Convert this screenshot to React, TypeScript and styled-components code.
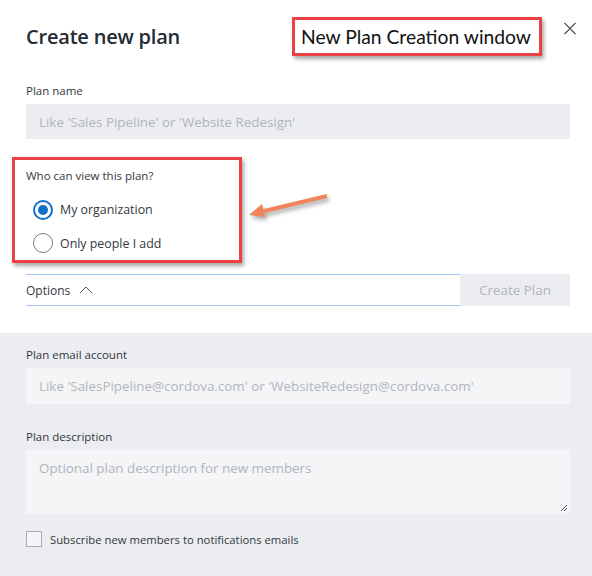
import React from "react";
import styled, { createGlobalStyle } from "styled-components";

const Global = createGlobalStyle`
  html, body { margin: 0; padding: 0; background: #fff; }
  body { width: 592px; height: 576px; overflow: hidden; font-family: "Segoe UI", "Open Sans", sans-serif; }
  * { box-sizing: border-box; }
`;

const Page = styled.div`
  position: relative;
  width: 592px;
  height: 576px;
  display: flex;
  flex-direction: column;
  background: #fff;
`;

const Top = styled.div`
  padding: 0 16px 0 26px;
  display: flex;
  flex-direction: column;
`;

const Header = styled.div`
  height: 72px;
  display: flex;
  align-items: center;
`;

const Title = styled.h1`
  margin: 0;
  font-family: "Open Sans", sans-serif;
  font-size: 20px;
  font-weight: 600;
  color: #262a33;
  letter-spacing: -0.2px;
  white-space: nowrap;
`;

const Callout = styled.div`
  margin-left: auto;
  flex-shrink: 0;
  width: 250px;
  height: 39px;
  border: 3px solid #ea4242;
  background: #fff;
  box-shadow: 2px 3px 4px rgba(0, 0, 0, 0.35);
  display: flex;
  align-items: center;
  padding-left: 6px;
  font-family: "Lato", sans-serif;
  font-size: 19.3px;
  color: #111;
  white-space: nowrap;
`;

const Close = styled.button`
  margin-left: 22px;
  flex-shrink: 0;
  align-self: flex-start;
  margin-top: 22px;
  width: 12px;
  height: 12px;
  padding: 0;
  border: 0;
  background: none;
  display: flex;
  align-items: center;
  justify-content: center;
`;

const Label = styled.div`
  font-family: "Open Sans", sans-serif;
  font-size: 11.5px;
  color: #333741;
  line-height: 16px;
`;

const TextInput = styled.div<{ $tone: "dark" | "light"; $h: number }>`
  width: 544px;
  height: ${(p) => p.$h}px;
  background: ${(p) => (p.$tone === "dark" ? "#ebedf0" : "#f4f5f7")};
  padding: 9px 13px;
  font-family: "Open Sans", sans-serif;
  font-size: 13.4px;
  color: #b2b6bc;
  line-height: 18px;
  position: relative;
`;

const Field = styled.div<{ $top: number }>`
  margin-top: ${(p) => p.$top}px;
  display: flex;
  flex-direction: column;
  gap: 5px;
`;

const AccessBox = styled.div`
  margin-top: 18px;
  margin-left: -14px;
  width: 230px;
  height: 106px;
  border: 3px solid #ea4242;
  box-shadow: 2px 3px 4px rgba(0, 0, 0, 0.35);
  padding: 8px 0 0 11px;
  display: flex;
  flex-direction: column;
`;

const RadioRow = styled.label`
  display: flex;
  align-items: center;
  gap: 7px;
  height: 34px;
  margin-left: 7px;
  font-family: "Open Sans", sans-serif;
  font-size: 12.4px;
  color: #333741;
`;

const RadioCircle = styled.span<{ $on?: boolean }>`
  width: 20px;
  height: 20px;
  border-radius: 50%;
  border: ${(p) => (p.$on ? "2px solid #0f6fc6" : "1px solid #7a7a7a")};
  display: flex;
  align-items: center;
  justify-content: center;
  &::after {
    content: "";
    display: ${(p) => (p.$on ? "block" : "none")};
    width: 10px;
    height: 10px;
    border-radius: 50%;
    background: #0f6fc6;
  }
`;

const OptionsBar = styled.div`
  margin-top: 11px;
  display: flex;
  width: 544px;
  height: 32px;
`;

const OptionsToggle = styled.div`
  flex: 1;
  border-top: 1px solid #9fc6ee;
  border-bottom: 1px solid #9fc6ee;
  display: flex;
  align-items: center;
  gap: 9px;
  font-family: "Open Sans", sans-serif;
  font-size: 12px;
  color: #333741;
`;

const CreateButton = styled.button`
  width: 110px;
  border: 0;
  background: #ebedf0;
  font-family: "Open Sans", sans-serif;
  font-size: 13.4px;
  color: #b2b6bc;
  padding: 0;
`;

const Gray = styled.div`
  margin-top: 27px;
  flex: 1;
  background: #ecedf0;
  padding: 14px 22px 0 26px;
  display: flex;
  flex-direction: column;
`;

const Grip = styled.svg`
  position: absolute;
  right: 2px;
  bottom: 2px;
`;

const CheckRow = styled.label`
  margin-top: 17px;
  display: flex;
  align-items: center;
  gap: 8px;
  font-family: "Open Sans", sans-serif;
  font-size: 11.3px;
  color: #333741;
`;

const Box = styled.span`
  width: 16px;
  height: 16px;
  border: 1px solid #a9abb0;
  background: #f4f5f7;
`;

const Arrow = styled.svg`
  position: absolute;
  left: 244px;
  top: 188px;
  filter: drop-shadow(2px 3px 2px rgba(0, 0, 0, 0.35));
`;

export default function App() {
  return (
    <Page>
      <Global />
      <Top>
        <Header>
          <Title>Create new plan</Title>
          <Callout>New Plan Creation window</Callout>
          <Close aria-label="Close">
            <svg width="13" height="13" viewBox="0 0 13 13">
              <path d="M0.5 0.5 L12.5 12.5 M12.5 0.5 L0.5 12.5" stroke="#333" strokeWidth="1.1" />
            </svg>
          </Close>
        </Header>
        <Field $top={11}>
          <Label>Plan name</Label>
          <TextInput $tone="dark" $h={35}>Like 'Sales Pipeline' or 'Website Redesign'</TextInput>
        </Field>
        <AccessBox>
          <Label>Who can view this plan?</Label>
          <div style={{ height: 9 }} />
          <RadioRow>
            <RadioCircle $on />
            My organization
          </RadioRow>
          <RadioRow>
            <RadioCircle />
            Only people I add
          </RadioRow>
        </AccessBox>
        <OptionsBar>
          <OptionsToggle>
            Options
            <svg width="14" height="8" viewBox="0 0 14 8">
              <path d="M1 7 L7 1 L13 7" fill="none" stroke="#555" strokeWidth="1" />
            </svg>
          </OptionsToggle>
          <CreateButton>Create Plan</CreateButton>
        </OptionsBar>
      </Top>
      <Gray>
        <Field $top={0}>
          <Label>Plan email account</Label>
          <TextInput $tone="light" $h={36}>
            Like 'SalesPipeline@cordova.com' or 'WebsiteRedesign@cordova.com'
          </TextInput>
        </Field>
        <Field $top={25}>
          <Label>Plan description</Label>
          <TextInput $tone="light" $h={64}>
            Optional plan description for new members
            <Grip width="8" height="8" viewBox="0 0 8 8">
              <path d="M7 1 L1 7 M7 4 L4 7" stroke="#555" strokeWidth="1" />
            </Grip>
          </TextInput>
        </Field>
        <CheckRow>
          <Box />
          Subscribe new members to notifications emails
        </CheckRow>
      </Gray>
      <Arrow width="90" height="32" viewBox="0 0 90 32">
        <path d="M83 8 L16 24" stroke="#f0845a" strokeWidth="4" strokeLinecap="butt" />
        <path d="M5 27 L18 16 L21 29 Z" fill="#f0845a" />
      </Arrow>
    </Page>
  );
}
